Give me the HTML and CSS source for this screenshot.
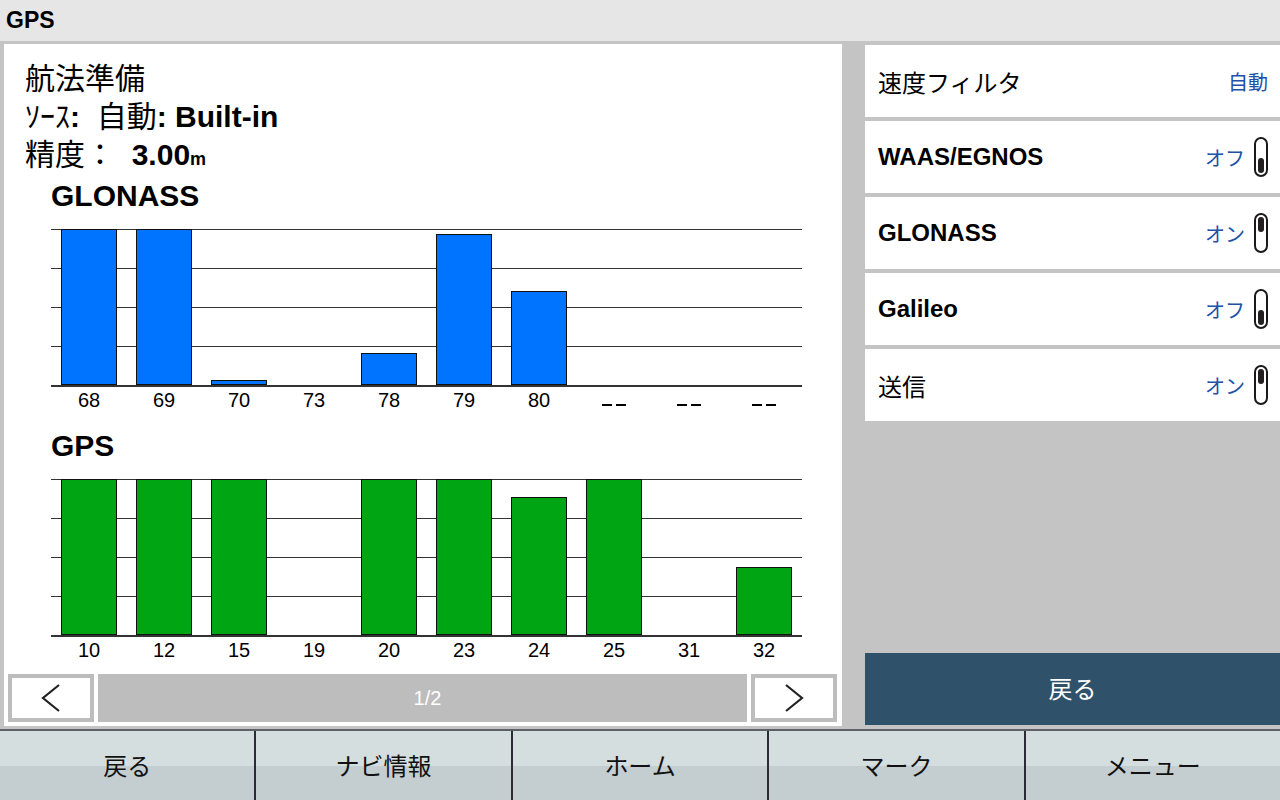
FILE: index.html
```html
<!DOCTYPE html>
<html lang="ja">
<head>
<meta charset="utf-8">
<title>GPS</title>
<link rel="stylesheet" href="styles.css">
</head>
<body>
<div class="titlebar">GPS</div>
<div class="main">
  <section class="panel">
    <div class="info">
      <div class="line">航法準備</div>
      <div class="line">ｿｰｽ<b>:</b>&nbsp; 自動<b>:</b> <b>Built-in</b></div>
      <div class="line">精度：&nbsp; <b>3.00<small>m</small></b></div>
    </div>

    <div class="chart">
      <div class="chart-title">GLONASS</div>
      <div class="plot">
        <div class="bar blue" style="height:156px"></div>
        <div class="bar blue" style="height:156px"></div>
        <div class="bar blue" style="height:5px"></div>
        <div class="bar empty"></div>
        <div class="bar blue" style="height:32px"></div>
        <div class="bar blue" style="height:151px"></div>
        <div class="bar blue" style="height:94px"></div>
        <div class="bar empty"></div>
        <div class="bar empty"></div>
        <div class="bar empty"></div>
      </div>
      <div class="labels">
        <div class="lbl">68</div>
        <div class="lbl">69</div>
        <div class="lbl">70</div>
        <div class="lbl">73</div>
        <div class="lbl">78</div>
        <div class="lbl">79</div>
        <div class="lbl">80</div>
        <div class="lbl"><span class="nodata"><i></i><i></i></span></div>
        <div class="lbl"><span class="nodata"><i></i><i></i></span></div>
        <div class="lbl"><span class="nodata"><i></i><i></i></span></div>
      </div>
    </div>

    <div class="chart">
      <div class="chart-title">GPS</div>
      <div class="plot">
        <div class="bar green" style="height:156px"></div>
        <div class="bar green" style="height:156px"></div>
        <div class="bar green" style="height:156px"></div>
        <div class="bar empty"></div>
        <div class="bar green" style="height:156px"></div>
        <div class="bar green" style="height:156px"></div>
        <div class="bar green" style="height:138px"></div>
        <div class="bar green" style="height:156px"></div>
        <div class="bar empty"></div>
        <div class="bar green" style="height:68px"></div>
      </div>
      <div class="labels">
        <div class="lbl">10</div>
        <div class="lbl">12</div>
        <div class="lbl">15</div>
        <div class="lbl">19</div>
        <div class="lbl">20</div>
        <div class="lbl">23</div>
        <div class="lbl">24</div>
        <div class="lbl">25</div>
        <div class="lbl">31</div>
        <div class="lbl">32</div>
      </div>
    </div>

    <div class="pager">
      <div class="pbtn">
        <svg width="20" height="30" viewBox="0 0 20 30"><polyline points="18,2 2,15 18,28" fill="none" stroke="#222" stroke-width="2.2"/></svg>
      </div>
      <div class="pstatus">1/2</div>
      <div class="pbtn">
        <svg width="20" height="30" viewBox="0 0 20 30"><polyline points="2,2 18,15 2,28" fill="none" stroke="#222" stroke-width="2.2"/></svg>
      </div>
    </div>
  </section>

  <aside class="side">
    <div class="rows">
      <div class="row">
        <span class="row-label">速度フィルタ</span>
        <span class="row-value">自動</span>
      </div>
      <div class="row">
        <span class="row-label bold">WAAS/EGNOS</span>
        <span class="row-value">オフ</span>
        <span class="toggle off"><i></i></span>
      </div>
      <div class="row">
        <span class="row-label bold">GLONASS</span>
        <span class="row-value">オン</span>
        <span class="toggle on"><i></i></span>
      </div>
      <div class="row">
        <span class="row-label bold">Galileo</span>
        <span class="row-value">オフ</span>
        <span class="toggle off"><i></i></span>
      </div>
      <div class="row">
        <span class="row-label">送信</span>
        <span class="row-value">オン</span>
        <span class="toggle on"><i></i></span>
      </div>
    </div>
    <div class="back">戻る</div>
  </aside>
</div>
<nav class="bottombar">
  <div class="tab">戻る</div>
  <div class="tab">ナビ情報</div>
  <div class="tab">ホーム</div>
  <div class="tab">マーク</div>
  <div class="tab">メニュー</div>
</nav>
</body>
</html>
```
FILE: styles.css
```css
* { box-sizing: border-box; }

html, body {
  margin: 0;
  padding: 0;
}

body {
  width: 1280px;
  height: 800px;
  overflow: hidden;
  background: #c4c4c4;
  color: #000;
  font-family: "Liberation Sans", "Noto Sans CJK JP", sans-serif;
}

.titlebar {
  height: 41px;
  line-height: 41px;
  background: #e6e6e6;
  font-size: 23px;
  font-weight: bold;
  padding-left: 6px;
}

.main {
  display: flex;
  height: 688px;
  padding: 3px 0 0 4px;
  background: #c4c4c4;
}

.panel {
  width: 838px;
  height: 682px;
  background: #fff;
  display: flex;
  flex-direction: column;
  padding: 16px 0 4px 0;
}

.info {
  padding-left: 21px;
}

.line {
  font-size: 30px;
  line-height: 38px;
  white-space: nowrap;
}

.line small {
  font-size: 18px;
}

.chart {
  margin-left: 47px;
  width: 751px;
}

.chart:first-of-type {
  margin-top: 6px;
}

.chart + .chart {
  margin-top: 16px;
}

.chart-title {
  font-size: 30px;
  line-height: 36px;
  font-weight: bold;
  margin-bottom: 15px;
}

.plot {
  height: 158px;
  display: flex;
  align-items: flex-end;
  gap: 19px;
  padding: 0 10px;
  border-bottom: 2px solid #333;
  background: repeating-linear-gradient(to bottom, #333 0, #333 1px, transparent 1px, transparent 39px);
}

.bar {
  width: 56px;
  flex: 0 0 56px;
  border: 1px solid #111;
}

.bar.empty {
  height: 0;
  border: 0;
}

.bar.blue { background: #0073ff; }
.bar.green { background: #00a514; }

.labels {
  display: flex;
  gap: 19px;
  padding: 0 10px;
  margin-top: 1px;
}

.lbl {
  width: 56px;
  flex: 0 0 56px;
  text-align: center;
  font-size: 20px;
  line-height: 24px;
  height: 24px;
}

.nodata {
  display: inline-flex;
  gap: 4px;
  margin-top: 16px;
  vertical-align: top;
}

.nodata i {
  display: block;
  width: 10px;
  height: 2px;
  background: #000;
}

.pager {
  margin: auto 5px 0 4px;
  display: flex;
  gap: 4px;
  height: 48px;
}

.pbtn {
  width: 86px;
  flex: 0 0 86px;
  border: 4px solid #bdbdbd;
  background: #fff;
  display: flex;
  align-items: center;
  justify-content: center;
}

.pstatus {
  flex: 1;
  background: #bdbdbd;
  color: #fff;
  font-size: 20px;
  padding-left: 10px;
  display: flex;
  align-items: center;
  justify-content: center;
}

.side {
  flex: 1;
  margin-left: 23px;
  margin-top: 1px;
  height: 680px;
  display: flex;
  flex-direction: column;
}

.rows {
  display: flex;
  flex-direction: column;
  gap: 4px;
}

.row {
  height: 72px;
  background: #fff;
  display: flex;
  align-items: center;
  padding: 0 12px 0 13px;
}

.row-label {
  flex: 1;
  font-size: 24px;
}

.row-label.bold {
  font-weight: bold;
}

.row-value {
  font-size: 20px;
  color: #2150a8;
}

.toggle {
  margin-left: 9px;
  width: 14px;
  height: 40px;
  border: 2.5px solid #1a1a1a;
  border-radius: 7px;
  padding: 2px 0;
  display: flex;
  flex-direction: column;
  align-items: center;
}

.toggle.off { justify-content: flex-end; }
.toggle.on { justify-content: flex-start; }

.toggle i {
  display: block;
  width: 6px;
  height: 15px;
  border-radius: 3px;
  background: #231f20;
}

.back {
  margin-top: auto;
  height: 72px;
  padding-bottom: 3px;
  background: #30516a;
  color: #fff;
  font-size: 24px;
  display: flex;
  align-items: center;
  justify-content: center;
}

.bottombar {
  height: 71px;
  border-top: 2px solid #5c6168;
  display: flex;
  background: linear-gradient(to bottom, #d5dede 0, #d5dede 35px, #c4cdd0 35px, #c4cdd0 100%);
}

.tab {
  flex: 1;
  display: flex;
  align-items: center;
  justify-content: center;
  font-size: 24px;
  padding-bottom: 3px;
  color: #111;
  border-left: 2px solid #2b2b38;
}

.tab:first-child {
  border-left: 0;
}
```
